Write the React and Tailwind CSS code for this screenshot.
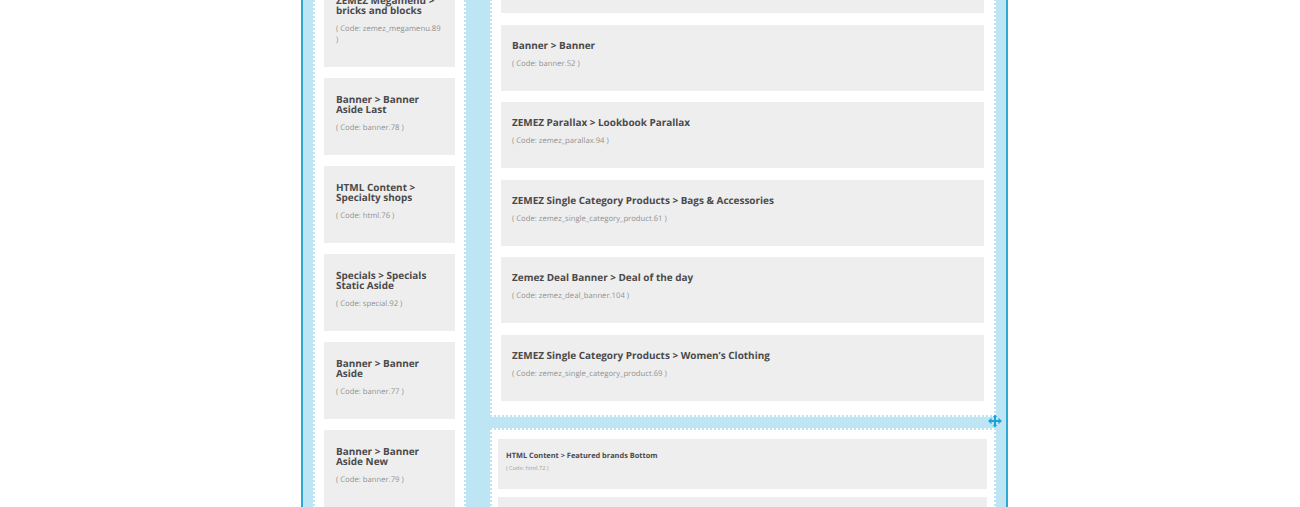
const asideModules = [
  { title: "ZEMEZ Megamenu > bricks and blocks", code: "zemez_megamenu.89", h: "h-[88px]" },
  { title: "Banner > Banner Aside Last", code: "banner.78" },
  { title: "HTML Content > Specialty shops", code: "html.76" },
  { title: "Specials > Specials Static Aside", code: "special.92" },
  { title: "Banner > Banner Aside", code: "banner.77" },
  { title: "Banner > Banner Aside New", code: "banner.79" },
];

const mainModules = [
  { title: "Slideshow > Home", code: "slideshow.51" },
  { title: "Banner > Banner", code: "banner.52" },
  { title: "ZEMEZ Parallax > Lookbook Parallax", code: "zemez_parallax.94" },
  { title: "ZEMEZ Single Category Products > Bags & Accessories", code: "zemez_single_category_product.61" },
  { title: "Zemez Deal Banner > Deal of the day", code: "zemez_deal_banner.104" },
  { title: "ZEMEZ Single Category Products > Women’s Clothing", code: "zemez_single_category_product.69" },
];

const panel = "border-2 border-dotted border-[#bde5f4] bg-white";

const AsideCard = ({ title, code, h }) => (
  <div className={`${h || "h-[77px]"} bg-[#eeeeee] px-[12px] pt-[16px]`}>
    <h3 className="text-[9.95px] font-bold leading-[10px] text-[#4a4a4a]">{title}</h3>
    <p className="mt-[9px] text-[7.7px] leading-[10.5px] text-[#929292]">( Code: {code} )</p>
  </div>
);

const MainCard = ({ title, code }) => (
  <div className="h-[66px] bg-[#eeeeee] px-[11px] pt-[14px]">
    <h3 className="text-[9.95px] font-bold leading-[13px] text-[#4a4a4a]">{title}</h3>
    <p className="mt-[7px] text-[7.7px] leading-[11px] text-[#929292]">( Code: {code} )</p>
  </div>
);

const SmallCard = ({ title, code }) => (
  <div className="h-[50px] bg-[#eeeeee] px-[8px] pt-[12px]">
    <h3 className="text-[7.4px] font-bold leading-[11px] text-[#4a4a4a]">{title}</h3>
    <p className="mt-[2px] text-[5.6px] leading-[8px] text-[#a0a0a0]">( Code: {code} )</p>
  </div>
);

export default function App() {
  return (
    <div className="h-[507px] overflow-hidden bg-white font-['Open_Sans',sans-serif] [text-rendering:geometricPrecision]">
      <div className="relative ml-[301px] flex h-[507px] w-[707px] items-start border-x-2 border-[#2fa8d5] bg-[#bde5f4] pl-[10px]">
        <div className={`${panel} -mt-[32px] flex w-[153px] shrink-0 flex-col gap-[11px] p-[9px]`}>
          {asideModules.map((m) => (
            <AsideCard key={m.code} {...m} />
          ))}
        </div>
        <div className="-mt-[64px] ml-[24px] w-[506px] shrink-0">
          <div className={`${panel} flex flex-col gap-[11.6px] py-[9px] pb-[14px] pl-[9px] pr-[10px]`}>
            {mainModules.map((m) => (
              <MainCard key={m.code} {...m} />
            ))}
          </div>
          <div className={`${panel} mt-[11px] flex flex-col gap-[8px] py-[9px] pl-[6px] pr-[7px]`}>
            <SmallCard title="HTML Content > Featured brands Bottom" code="html.72" />
            <SmallCard title="HTML Content > Footer" code="html.73" />
          </div>
        </div>
        <svg className="absolute left-[685px] top-[414px]" width="14" height="14" viewBox="0 0 14 14" fill="#18a3dc">
          <path d="M6 2h2v10H6z" />
          <path d="M2 6h10v2H2z" />
          <path d="M0 7l3.5-3.2v6.4zM14 7l-3.5-3.2v6.4zM7 0.5l2.2 2.5H4.8zM7 13.5l2.2-2.5H4.8z" />
        </svg>
      </div>
    </div>
  );
}
